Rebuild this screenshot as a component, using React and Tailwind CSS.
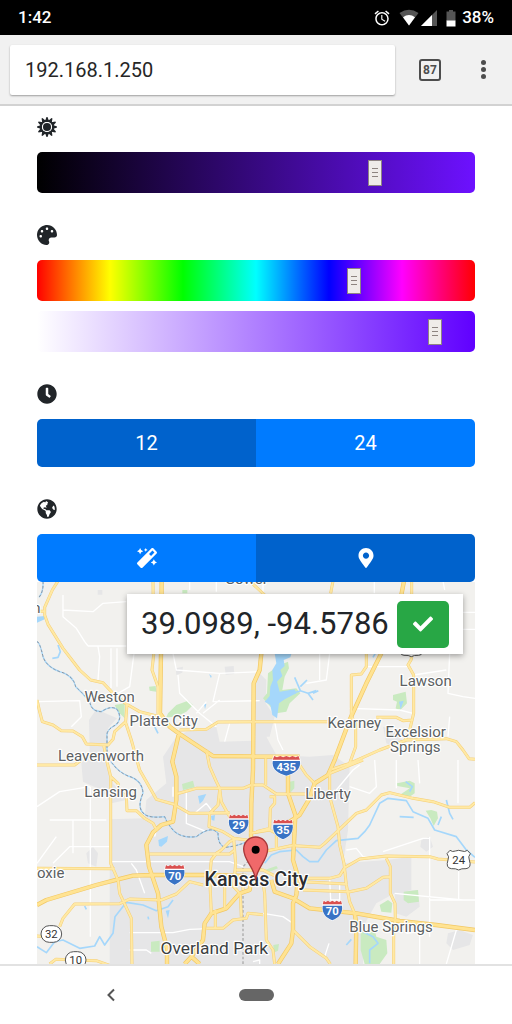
import { useState } from "react";
import {
  FaCheck,
  FaClock,
  FaGlobeAmericas,
  FaMagic,
  FaMapMarkerAlt,
  FaPalette,
} from "react-icons/fa";
import { MdAlarm } from "react-icons/md";

const URBAN = [
  "M240 748 L345 745 350 690 410 640 400 560 440 500 470 485 560 470 570 515 672 512 690 470 710 500 740 555 840 560 910 555 960 590 955 780 940 880 1070 870 1145 860 1145 960 1095 970 1040 1000 1000 1070 1000 1182 240 1182 240 1040Z",
  "M178 450 L200 418 262 445 235 475 232 560 250 640 290 690 245 700 215 660 160 635 155 580 180 540Z",
  "M668 360 L690 310 710 330 708 400 735 440 720 500 668 500Z",
  "M438 295 L460 290 458 308 440 315Z",
  "M585 290 L612 288 614 312 588 314Z",
  "M204 60 h14 v14 h-14Z",
  "M1175 810 L1200 800 1210 830 1190 845 1172 830Z",
  "M1095 965 L1165 960 1170 1010 1130 1040 1098 1030Z",
  "M1255 1090 L1290 1080 1330 1095 1320 1125 1270 1140 1250 1120Z",
  "M1060 470 L1090 480 1130 520 1110 540 1070 520Z",
  "M170 850 L190 830 205 850 200 890 175 880Z",
];

const PARKS = [
  "M415 430 L440 405 475 392 490 405 470 425 440 440 410 442Z",
  "M358 350 L378 348 380 365 360 362Z",
  "M458 60 h15 v10 h-15Z",
  "M255 405 L285 400 285 445 265 425Z",
  "M457 642 L490 632 495 652 460 660Z",
  "M364 1115 L390 1112 390 1145 364 1145Z",
  "M750 285 L775 275 778 295 765 320 758 360 800 355 812 370 780 400 770 425 740 430 700 385 712 370 715 310Z",
  "M1090 375 L1128 365 1132 400 1110 422 1098 415 1102 395 1090 390Z",
  "M1102 640 L1140 632 1155 640 1155 670 1140 680 1110 675 1140 655 1103 648Z",
  "M1188 722 L1205 720 1222 725 1225 745 1212 768 1202 745Z",
  "M1122 965 L1165 960 1168 995 1135 1000 1122 990Z",
  "M1050 1005 L1075 990 1088 1000 1085 1028 1055 1025Z",
  "M993 1085 L1035 1080 1040 1100 1070 1110 1073 1150 1050 1182 1005 1182 993 1140Z",
  "M705 900 L740 888 745 895 720 905Z",
  "M780 635 L794 632 794 655 782 668Z",
  "M731 1125 L748 1122 745 1142 732 1148Z",
];

const LAKES = [
  "M735 250 L785 252 782 262 762 270 765 288 752 300 758 318 742 335 750 365 795 358 800 370 765 388 748 400 742 445 728 435 722 405 705 395 720 378 722 350 730 330 728 300 740 280Z",
  "M505 678 L530 672 520 692 510 702Z",
  "M386 810 L415 798 412 815 395 830 388 828Z",
  "M408 1022 L420 1020 415 1045Z",
  "M22 140 L45 138 45 148 22 158Z",
  "M1108 395 L1122 392 1113 418Z",
  "M544 738 L556 735 554 752 546 750Z",
  "M523 402 L530 402 526 418Z",
  "M538 312 L546 318 544 325Z",
];

const STREAMS = [
  "M790 370 L812 362 835 370 860 362 M812 362 L795 322 M812 350 L832 330 M835 370 L850 390 M850 370 L866 362",
  "M85 225 L92 245 85 262 68 265",
  "M22 1130 L50 1148 75 1115 100 1110 150 1135 195 1128 210 1100 225 1125 250 1090 256 1040 290 997 340 1005 380 1022 415 1010 430 990",
  "M705 880 L725 855 750 845 800 840 820 860 840 875 865 875 890 840 920 812 985 805 1005 785 1020 765 1050 700 1075 685 1130 692 1150 725 1195 745 1215 780 1280 800 1310 840 1336 862",
  "M1110 740 L1152 742 M1225 765 L1235 740 M1250 690 L1260 730 1270 748",
  "M375 470 L385 490 M1040 245 L1030 262 M1000 1085 L1030 1100 1045 1120 1020 1140 1020 1180 M950 1125 L965 1108",
  "M1128 635 L1148 650 1140 665 M165 1008 L170 1018 M355 1040 L357 1048",
];

const BORDER =
  "M40 33 Q42 65 28 82 M22 215 Q30 215 40 260 Q50 290 90 305 Q130 315 138 350 Q160 370 180 395 Q185 425 215 425 Q245 405 262 418 Q280 445 258 465 Q228 480 232 500 L232 550 Q240 575 250 582 Q265 605 295 618 Q338 630 340 670 Q320 715 345 733 Q360 745 405 740 Q415 765 435 785 Q460 805 500 800 Q545 765 565 790 Q565 825 585 832 Q620 830 660 812";

const LOCAL_ROADS = [
  "M100 75 L100 140 140 175 165 215 175 228 M100 120 L190 125 220 100 290 95",
  "M22 395 L150 392 155 440 125 470 M205 230 L210 260 205 330 M244 235 L244 355 M262 235 L262 350 M315 235 L300 350 265 370",
  "M175 228 L290 228 M430 250 L440 300 570 310 690 305 M570 310 L550 395 690 392",
  "M445 315 L450 370 510 430 560 470 M520 430 L570 390 M600 460 L585 515 M500 430 L530 395",
  "M22 710 L90 665 180 650 M70 880 L120 830 240 830 M60 750 L230 750 M130 750 L130 850 M182 650 L182 1100 M22 880 L80 800",
  "M245 875 L600 875 640 890 M305 880 L320 900 345 970 M300 1088 L430 1088 480 1078 560 1075 M300 1140 L350 1140 365 1150",
  "M430 680 L430 650 M470 660 L470 760 530 785 M495 730 L530 700 545 720 M375 800 L380 780",
  "M900 250 L890 330 830 340 M870 250 L870 330 M1010 290 L1140 290 M1152 315 L1250 300 M1260 250 L1255 370 1300 380 1336 385",
  "M1260 440 L1255 500 M1300 127 L1336 127 M1290 178 L1336 178 M1034 33 L1034 70 M960 415 L1110 420 1150 430 M735 455 L745 510 760 540",
  "M700 70 L700 33 M560 33 L560 65 M480 33 L480 60 M1240 33 L1245 60",
  "M920 660 L970 600 990 585 M1035 570 L1040 650 1020 670 960 650 M1100 570 L1100 655 M1165 570 L1170 640 M1285 570 L1285 700",
  "M950 840 L980 835 1000 860 1040 865 M1060 845 L1180 805 1200 805 M1200 800 L1200 1100 M1095 970 L1300 990 M1200 990 L1336 990 M1287 895 L1287 990",
  "M900 925 L903 990 930 990 M930 940 L930 1000 M1200 1010 L1200 1080 1130 1090 M1280 1080 L1250 1182 M1170 1090 L1170 1182",
  "M700 1030 L760 1040 790 1060 M690 1182 L690 1170 670 1175 M885 1160 L898 1120",
];

const ROADS = [
  "M22 124 L45 124 M85 33 L68 60 45 112 45 135 55 163 100 235 150 300 183 330 220 338 255 375 290 402 330 425 390 440",
  "M22 390 L30 425 38 455 70 465 95 482 130 483 158 500 170 522 235 525 250 508 255 485 288 455 292 402",
  "M222 525 L232 575 243 620 243 880 265 930 270 970 305 1045 307 1182",
  "M370 33 L372 255 367 300 385 350 385 430 395 440",
  "M287 455 L305 510 330 600 370 670 380 688 430 702 480 730 600 728",
  "M450 480 L530 478 565 456 690 455 900 455",
  "M1040 442 L1100 442 1120 452 1150 450",
  "M530 540 L540 590 560 635 570 655 575 695 600 740 625 770",
  "M440 672 L500 655 640 655 665 645 700 645 740 672 830 672",
  "M570 660 L565 705 540 730 538 770 580 785 612 805 690 815",
  "M243 620 L265 640 268 660 290 680 292 722 320 722 345 745 370 760 382 782",
  "M22 585 L135 585 155 570",
  "M22 895 L255 896",
  "M360 852 L600 852 615 840",
  "M90 1070 L100 1045 135 1002 270 1001 300 987 395 990 440 972 480 935 520 945",
  "M60 1182 L78 1168 200 1172 240 1186",
  "M22 1098 L50 1100",
  "M1010 250 L1010 290 995 312 965 315 965 440 978 460 978 530 958 585",
  "M900 600 L960 580 1050 540 1130 510 1250 506 1280 515 1300 540 1318 566 1336 568",
  "M1145 255 L1145 268 1135 285 1152 315 1152 430 1140 480 1125 512",
  "M910 33 L903 70 M1146 33 L1146 75 M660 33 L705 75",
  "M708 565 L708 645 M720 680 L735 680 735 700 722 715 720 775 680 785",
  "M810 585 L830 615 855 640",
  "M1000 570 L895 612 M900 600 L900 680 925 770 930 825 943 880 950 945 960 995 975 1030",
  "M797 827 L870 832 885 820 980 730 1010 720 1055 675 1080 668 1150 685 1210 695 1260 712 1320 712 1336 698",
  "M700 845 L780 828 800 825",
  "M945 893 L990 867 1070 858 1200 860 1225 867 1336 876",
  "M790 905 L820 925 900 925 930 917 945 893 M780 932 L820 935 950 942 M820 960 L960 965 1010 955 1060 922 1080 920",
  "M1070 865 L1082 890 1082 970 1096 1000 1097 1045 1092 1090 1092 1182",
  "M700 940 L705 970 710 1110 730 1140 735 1182",
  "M790 1080 L840 1130 890 1165 902 1182",
  "M545 1030 L540 920 545 870 560 850 575 840 600 815 620 805",
  "M612 805 L618 880 612 950 632 972 635 1040",
  "M585 1015 L585 930 M557 1020 L557 1075 M530 1075 L580 1075 610 1050 650 1045 655 1030 700 1034",
  "M640 915 L640 960 M620 900 L700 900 740 920 M660 790 L720 780 740 790 740 840",
];

const HIGHWAYS = [
  "M396 33 L394 250 391 430 420 470 450 492 500 525 550 558 810 560",
  "M448 490 L428 575 440 620 440 690 430 755 395 765 370 787 350 825 358 890 385 970 395 1070 412 1135 412 1182",
  "M695 250 L690 300 672 340 670 600 665 700 664 800 672 850 690 900",
  "M1123 33 L1115 75 M1055 250 L1010 340 960 450 915 570 895 615 855 640 840 685 810 735 780 755",
  "M22 1005 L50 990 200 945 265 928 310 917 365 915 540 915 650 918",
  "M725 930 L735 965 790 985 840 1015 980 1030 1110 1053 1220 1065 1336 1080",
  "M775 615 L775 670 797 735 793 820 790 870 805 920 800 975 790 1000 790 1080 785 1120 745 1182",
  "M465 1182 L485 1160 520 1110 525 1060 545 1030 590 1015 630 970 660 960 665 930 M485 1160 L510 1182",
  "M975 1030 L980 1060 978 1182",
];

const TOWNS = [
  { name: "Gower", x: 650, y: 43 },
  { name: "Weston", x: 240, y: 396 },
  { name: "Platte City", x: 402, y: 468 },
  { name: "Leavenworth", x: 214, y: 572 },
  { name: "Lansing", x: 243, y: 682 },
  { name: "oxie", x: 63, y: 925 },
  { name: "n", x: 20, y: 130 },
  { name: "Lawson", x: 1188, y: 348 },
  { name: "Kearney", x: 974, y: 474 },
  { name: "Liberty", x: 895, y: 687 },
  { name: "Blue Springs", x: 1084, y: 1087 },
];

const INTERSTATES = [
  { number: "435", x: 770, y: 588, wide: true },
  { number: "29", x: 627, y: 764 },
  { number: "35", x: 760, y: 779 },
  { number: "70", x: 435, y: 915 },
  { number: "70", x: 908, y: 1022 },
];

const SUN_RAYS = Array.from({ length: 12 }, (_, index) => index * 30);

function SunIcon() {
  return (
    <svg width="20" height="20" viewBox="-10 -10 20 20" aria-hidden="true">
      {SUN_RAYS.map((angle) => (
        <path key={angle} d="M-2 -6 L-0.500 -10 H0.500 L2 -6Z" fill="currentColor" transform={`rotate(${angle})`} />
      ))}
      <circle r="6" fill="none" stroke="currentColor" strokeWidth="2" />
      <circle r="5" fill="#fff" />
      <circle r="4" fill="currentColor" />
    </svg>
  );
}

function Interstate({ number, x, y, wide }) {
  return (
    <g transform={`translate(${x} ${y})`}>
      <path
        transform={wide ? "scale(1.4 1)" : undefined}
        d="M-27 -32 Q-20 -26 -14 -30 Q-7 -26 0 -31 Q7 -26 14 -30 Q20 -26 27 -32 Q31 -22 31 -10 C31 10 20 22 0 31 C-20 22 -31 10 -31 -10 Q-31 -22 -27 -32Z"
        fill="#fff"
      />
      <path
        transform={wide ? "scale(1.4 1)" : undefined}
        d="M-26 -30 L-20 -26 -13 -30 -7 -26 0 -30 7 -26 13 -30 20 -26 26 -30 29 -19 H-29Z"
        fill="#d9504f"
      />
      <path
        transform={wide ? "scale(1.4 1)" : undefined}
        d="M-29 -15 H29 C32 8 19 21 0 29 C-19 21 -32 8 -29 -15Z"
        fill="#3973c5"
      />
      <text y="14" fontSize="34" fontWeight="700" fill="#fff" textAnchor="middle">
        {number}
      </text>
    </g>
  );
}

function StateRoute({ number, x, y }) {
  return (
    <g transform={`translate(${x} ${y})`}>
      <rect x="-31" y="-25" width="62" height="50" rx="25" fill="#fff" stroke="#555" strokeWidth="3" />
      <text y="12" fontSize="34" fill="#333" textAnchor="middle">
        {number}
      </text>
    </g>
  );
}

function UsRoute({ number, x, y }) {
  return (
    <g transform={`translate(${x} ${y})`}>
      <path
        d="M-26 -29 Q-18 -23 -10 -27 Q0 -31 10 -27 Q18 -23 26 -29 L35 -19 Q27 -10 32 0 Q40 24 22 26 Q8 25 0 30 Q-8 25 -22 26 Q-40 24 -32 0 Q-27 -10 -35 -19Z"
        fill="#fff"
        stroke="#555"
        strokeWidth="3"
        strokeLinejoin="round"
      />
      {number && (
        <text y="12" fontSize="34" fill="#333" textAnchor="middle">
          {number}
        </text>
      )}
    </g>
  );
}

function CityMap() {
  return (
    <svg
      className="absolute inset-0 h-full w-full font-[Roboto,sans-serif]"
      viewBox="22 33 1314 1149"
      preserveAspectRatio="xMidYMax slice"
      role="img"
      aria-label="Map of Kansas City"
    >
      <rect x="22" y="33" width="1314" height="1149" fill="#f2f1ee" />
      <path d={URBAN.join(" ")} fill="#e6e6e7" />
      <path d={PARKS.join(" ")} fill="#c9eac0" />
      <path d={LAKES.join(" ")} fill="#a5d7fb" />
      <g fill="none" strokeLinejoin="round">
        <path d={LOCAL_ROADS.join(" ")} stroke="#fff" strokeWidth="4" />
        <path d={STREAMS.join(" ")} stroke="#a5d7fb" strokeWidth="5" />
        <path d={BORDER} stroke="#a5d7fb" strokeWidth="4" />
        <path d={BORDER} stroke="#8d959f" strokeWidth="3" strokeDasharray="8 6" />
        <path d="M640 1182 V950 L640 890 680 850" stroke="#aaa" strokeWidth="4" strokeDasharray="8 6" />
        <path d={ROADS.join(" ")} stroke="#f5cf76" strokeWidth="9" />
        <path d={HIGHWAYS.join(" ")} stroke="#f2c864" strokeWidth="13" />
        <path d={ROADS.join(" ")} stroke="#ffe9a5" strokeWidth="6" />
        <path d={HIGHWAYS.join(" ")} stroke="#ffe392" strokeWidth="9" />
      </g>

      <UsRoute x={1145} y={230} />
      <UsRoute number="24" x={1287} y={870} />
      <StateRoute number="32" x={65} y={1092} />
      <StateRoute number="10" x={138} y={1170} />
      {INTERSTATES.map((road) => (
        <Interstate key={`${road.number}-${road.x}`} {...road} />
      ))}

      <g textAnchor="middle" stroke="#fff" strokeWidth="7" strokeLinejoin="round" paintOrder="stroke">
        {TOWNS.map((town) => (
          <text key={town.name} x={town.x} y={town.y} fontSize="45" fill="#5c5f62">
            {town.name}
          </text>
        ))}
        <text fontSize="45" fill="#5c5f62">
          <tspan x="1158" y="501">
            Excelsior
          </tspan>
          <tspan x="1157" y="547">
            Springs
          </tspan>
        </text>
        <text x="554" y="1151" fontSize="52" fill="#3c3f42">
          Overland Park
        </text>
        <text x="680" y="947" fontSize="59" fontWeight="500" fill="#2b2d30">
          Kansas City
        </text>
      </g>

      <path
        d="M678 930 C674 890 642 872 642 837 A36 36 0 0 1 714 837 C714 872 682 890 678 930Z"
        fill="#f0696a"
        stroke="#a8383a"
        strokeWidth="4"
      />
      <circle cx="678" cy="839" r="12" fill="#000" />
    </svg>
  );
}

const THUMB =
  "[&::-webkit-slider-thumb]:h-[26px] [&::-webkit-slider-thumb]:w-[14px] [&::-webkit-slider-thumb]:appearance-none [&::-webkit-slider-thumb]:border [&::-webkit-slider-thumb]:border-[#8f8484] [&::-webkit-slider-thumb]:bg-[#efece9] [&::-webkit-slider-thumb]:bg-[linear-gradient(#8d8480_1px,transparent_1px,transparent_4px,#8d8480_4px,#8d8480_5px,transparent_5px,transparent_8px,#8d8480_8px)] [&::-webkit-slider-thumb]:bg-[length:6px_9px] [&::-webkit-slider-thumb]:bg-center [&::-webkit-slider-thumb]:bg-no-repeat";

function Slider({ label, initial, gradient }) {
  const [value, setValue] = useState(initial);
  return (
    <input
      type="range"
      min="0"
      max="1000"
      aria-label={label}
      value={value}
      onChange={(event) => setValue(Number(event.target.value))}
      className={`block h-[41px] w-full appearance-none rounded-[5px] ${gradient} ${THUMB}`}
    />
  );
}

function Toggle({ label, options, initial }) {
  const [selected, setSelected] = useState(initial);
  return (
    <div role="group" aria-label={label} className="grid h-12 grid-cols-2 overflow-hidden rounded-[5px]">
      {options.map((option, index) => (
        <button
          key={option.name}
          type="button"
          aria-label={option.name}
          aria-pressed={selected === index}
          onClick={() => setSelected(index)}
          className={`flex items-center justify-center text-xl text-white ${
            selected === index ? "bg-[#0062cc]" : "bg-[#007bff]"
          }`}
        >
          {option.content}
        </button>
      ))}
    </div>
  );
}

function StatusBar() {
  return (
    <div className="flex h-[35px] items-center bg-black px-[18px] text-[17px] font-medium text-white">
      <span className="flex-1">1:42</span>
      <MdAlarm size={18} aria-hidden="true" />
      <svg className="ml-2" width="20" height="18" viewBox="0 0 20 18" aria-hidden="true">
        <path d="M0.500 4 Q10 -2.500 19.500 4 L10 16.500Z" fill="#555" />
        <path d="M4 8.200 Q10 3.800 16 8.200 L10 16.500Z" fill="#fff" />
      </svg>
      <svg className="ml-0.5" width="16" height="18" viewBox="0 0 16 18" aria-hidden="true">
        <path d="M16 1 V17 H0Z" fill="#555" />
        <path d="M11 6 V17 H0Z" fill="#fff" />
      </svg>
      <svg className="mr-1.5 ml-[9px]" width="10" height="18" viewBox="0 0 10 18" aria-hidden="true">
        <path d="M0.500 2.500 H3 V1 H7 V2.500 H9.500 V12 H0.500Z" fill="#555" />
        <path d="M0.500 11.500 H9.500 V17.500 H0.500Z" fill="#fff" />
      </svg>
      <span>38%</span>
    </div>
  );
}

function AddressBar() {
  return (
    <div className="flex h-[71px] items-center border-b-2 border-[#d2d2d2] bg-[#f1f1f1] pr-[19px] pl-2.5">
      <input
        type="text"
        aria-label="Address"
        defaultValue="192.168.1.250"
        className="h-[50px] min-w-0 flex-1 rounded-xs bg-white px-[15px] text-xl text-[#262626] shadow-[0_1px_2px_rgba(0,0,0,0.35)]"
      />
      <button
        type="button"
        aria-label="87 open tabs"
        className="ml-6 flex size-[22px] items-center justify-center rounded-[3px] border-2 border-[#4d4d4d] text-xs font-bold text-[#4d4d4d]"
      >
        87
      </button>
      <button type="button" aria-label="Menu" className="ml-8 flex w-5 flex-col items-center gap-0.5">
        <span className="size-[5px] rounded-full bg-[#4d4d4d]" />
        <span className="size-[5px] rounded-full bg-[#4d4d4d]" />
        <span className="size-[5px] rounded-full bg-[#4d4d4d]" />
      </button>
    </div>
  );
}

function Section({ icon, children, className = "" }) {
  return (
    <section className={`flex flex-col ${className}`}>
      <div className="mb-[15px] text-[20px]">{icon}</div>
      {children}
    </section>
  );
}

export default function App() {
  return (
    <div className="flex min-h-screen flex-col bg-white font-[Roboto,sans-serif] text-[#212529]">
      <StatusBar />
      <AddressBar />

      <main className="flex flex-1 flex-col gap-8 px-[37px] pt-[11px]">
        <Section icon={<SunIcon />}>
          <Slider label="Brightness" initial={780} gradient="bg-linear-to-r/srgb from-black to-[#6d11ff]" />
        </Section>

        <Section icon={<FaPalette aria-hidden="true" />}>
          <div className="flex flex-col gap-2.5">
            <Slider
              label="Hue"
              initial={731}
              gradient="bg-[linear-gradient(to_right,#f00,#ff0,#0f0,#0ff,#00f,#f0f,#f00)]"
            />
            <Slider label="Saturation" initial={921} gradient="bg-linear-to-r/srgb from-white to-[#6000ff]" />
          </div>
        </Section>

        <Section icon={<FaClock aria-hidden="true" />}>
          <Toggle
            label="Clock format"
            initial={0}
            options={[
              { name: "12", content: "12" },
              { name: "24", content: "24" },
            ]}
          />
        </Section>

        <Section icon={<FaGlobeAmericas aria-hidden="true" />} className="flex-1">
          <Toggle
            label="Location"
            initial={1}
            options={[
              { name: "Automatic", content: <FaMagic aria-hidden="true" /> },
              { name: "Manual", content: <FaMapMarkerAlt aria-hidden="true" /> },
            ]}
          />
          <div className="relative min-h-[380px] flex-1 overflow-hidden">
            <CityMap />
            <form
              onSubmit={(event) => event.preventDefault()}
              className="absolute top-3 right-3 flex h-[60px] items-center bg-white px-3.5 shadow-[0_2px_6px_rgba(0,0,0,0.35)]"
            >
              <input
                type="text"
                aria-label="Coordinates"
                defaultValue="39.0989, -94.5786"
                className="w-64 bg-transparent text-[31px]"
              />
              <button
                type="submit"
                aria-label="Confirm location"
                className="flex h-[47px] w-[52px] items-center justify-center rounded-[5px] bg-[#28a745] text-xl text-white"
              >
                <FaCheck aria-hidden="true" />
              </button>
            </form>
          </div>
        </Section>
      </main>

      <nav aria-label="System" className="flex h-[60px] border-t-2 border-[#e2e2e2] bg-white">
        <div className="flex flex-1 items-center justify-center">
          <button type="button" aria-label="Back" className="mr-4">
            <svg width="12" height="14" viewBox="0 0 12 14" aria-hidden="true">
              <path d="M9 1.500 L3.500 7 L9 12.500" fill="none" stroke="#555" strokeWidth="2" />
            </svg>
          </button>
        </div>
        <div className="flex items-center">
          <button type="button" aria-label="Home" className="h-3 w-[35px] rounded-full bg-[#666]" />
        </div>
        <div className="flex-1" />
      </nav>
    </div>
  );
}
